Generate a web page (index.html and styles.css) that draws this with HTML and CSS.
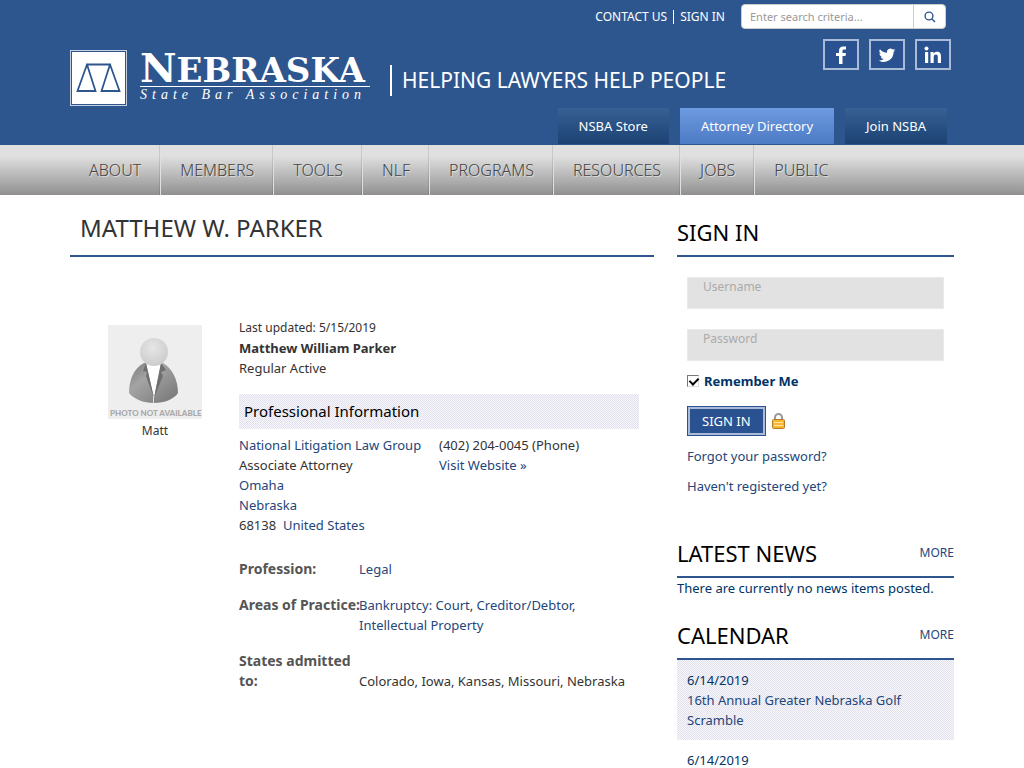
FILE: index.html
```
<!DOCTYPE html>
<html lang="en">
<head>
  <meta charset="UTF-8" />
  <meta name="viewport" content="width=device-width, initial-scale=1.0" />
  <title>Matthew W. Parker - Nebraska State Bar Association</title>
  <link rel="stylesheet" href="styles.css">
</head>

<body>

<header>
  <!-- Contact links and search -->
  <div class="top-bar">
    <div class="top-links">
      <a href="#">CONTACT US</a>
      <a href="#">SIGN IN</a>
    </div>
    <form class="search">
      <input type="text" placeholder="Enter search criteria..." aria-label="Search" />
      <button type="submit" aria-label="Search">
        <svg width="12" height="12" viewBox="0 0 12 12" fill="none" stroke="#2e568e" stroke-width="1.4"><circle cx="5" cy="5" r="3.9"/><path d="M7.8 7.8L11 11"/></svg>
      </button>
    </form>
  </div>

  <!-- Logo, tagline, social -->
  <div class="brand-row">
    <a class="logo" href="#">
      <svg width="57" height="57" viewBox="0 0 57 57" fill="none">
        <rect x="0.5" y="0.5" width="56" height="55" stroke="#c3cfe0"/>
        <rect x="2" y="2" width="53" height="52" fill="#fff"/>
        <path d="M16 14.500H41M17 14.500L7.500 41H25.500L17 14.500M40 14.500L31.500 41H49.500L40 14.500" stroke="#2e568e" stroke-width="1.800"/>
      </svg>
      <span class="logo-text">
        <span class="logo-name"><span class="logo-cap">N</span>EBRASKA</span>
        <span class="logo-sub">State Bar Association</span>
      </span>
    </a>
    <span class="tagline">HELPING LAWYERS HELP PEOPLE</span>
    <div class="social">
      <a href="#" aria-label="Facebook">
        <svg width="20" height="20" viewBox="0 0 20 20" fill="#fff"><path d="M8 19v-8H5V8h3V6c0-3 1.500-4.500 4-4.500h3v3h-2c-1 0-1.500.5-1.500 1.500v2H15l-.5 3h-3v8z"/></svg>
      </a>
      <a href="#" aria-label="Twitter">
        <svg width="18" height="18" viewBox="0 0 24 24" fill="#fff"><path d="M23 5.500a9 9 0 0 1-2.500.7 4.500 4.500 0 0 0 2-2.500 9 9 0 0 1-2.900 1.100A4.500 4.500 0 0 0 12 9 13 13 0 0 1 2.600 4.200a4.500 4.500 0 0 0 1.400 6 4.500 4.500 0 0 1-2-.5 4.500 4.500 0 0 0 3.600 4.500 4.500 4.500 0 0 1-2 .1 4.500 4.500 0 0 0 4.200 3.100A9 9 0 0 1 1 19.300a13 13 0 0 0 19.800-11.500A9 9 0 0 0 23 5.500z"/></svg>
      </a>
      <a href="#" aria-label="LinkedIn">
        <svg width="20" height="20" viewBox="0 0 20 20" fill="#fff"><circle cx="3.500" cy="3.500" r="2"/><path d="M2 7h3.200v11H2zM7.500 7h3v1.500c1-1.300 2-1.800 3.500-1.800 3 0 4 2 4 4.600V18h-3.200v-6c0-1.700-.6-2.500-1.800-2.500S10.700 10.300 10.700 12v6H7.500z"/></svg>
      </a>
    </div>
  </div>

  <div class="header-tabs">
    <a href="#">NSBA Store</a>
    <a class="active" href="#">Attorney Directory</a>
    <a href="#">Join NSBA</a>
  </div>
</header>

<nav class="main-nav">
  <a href="#">ABOUT</a>
  <a href="#">MEMBERS</a>
  <a href="#">TOOLS</a>
  <a href="#">NLF</a>
  <a href="#">PROGRAMS</a>
  <a href="#">RESOURCES</a>
  <a href="#">JOBS</a>
  <a href="#">PUBLIC</a>
</nav>

<div class="page">
  <main>
    <h1>MATTHEW W. PARKER</h1>

    <div class="profile">
      <div class="photo">
        <svg width="94" height="94" viewBox="0 0 94 94">
          <defs>
            <radialGradient id="head" cx="0.45" cy="0.35" r="0.7"><stop offset="0" stop-color="#e6e6e6"/><stop offset="1" stop-color="#cbcacb"/></radialGradient>
            <linearGradient id="coat" x1="0" y1="0" x2="1" y2="1"><stop offset="0" stop-color="#787878"/><stop offset="0.35" stop-color="#a4a4a4"/><stop offset="1" stop-color="#747474"/></linearGradient>
          </defs>
          <rect width="94" height="94" fill="#eee"/>
          <path d="M36 38C26 43 21 55 21 68c5 6 14 10 25 10s20-4 24-10c0-13-6-25-15-30z" fill="url(#coat)"/>
          <path d="M38 38h15l-7 35z" fill="#fff"/>
          <path d="M38 38l-3 8 4 1-1 4 8 22zM53 38l5 7-5 2 2 4-9 22z" fill="#6f6f6f"/>
          <path d="M45.500 71v7" stroke="#ddd"/>
          <circle cx="46" cy="27" r="14" fill="url(#head)"/>
          <text x="2" y="91" class="photo-note">PHOTO NOT AVAILABLE</text>
        </svg>
        <span>Matt</span>
      </div>

      <div class="info">
        <div class="updated">Last updated: 5/15/2019</div>
        <strong>Matthew William Parker</strong>
        <div>Regular Active</div>

        <h3 class="stipple">Professional Information</h3>
        <div class="contact">
          <div>
            <a href="#">National Litigation Law Group</a><br>
            Associate Attorney<br>
            <a href="#">Omaha</a><br>
            <a href="#">Nebraska</a><br>
            68138&nbsp; <a href="#">United States</a>
          </div>
          <div>
            (402) 204-0045 (Phone)<br>
            <a href="#">Visit Website »</a>
          </div>
        </div>

        <dl>
          <dt>Profession:</dt>
          <dd><a href="#">Legal</a></dd>
          <dt>Areas of Practice:</dt>
          <dd><a href="#">Bankruptcy: Court</a>, <a href="#">Creditor/Debtor</a>, <a href="#">Intellectual Property</a></dd>
          <dt>States admitted to:</dt>
          <dd>Colorado, Iowa, Kansas, Missouri, Nebraska</dd>
        </dl>
      </div>
    </div>
  </main>

  <aside>
    <h2>SIGN IN</h2>
    <form class="login">
      <input type="text" placeholder="Username" aria-label="Username" />
      <input type="password" placeholder="Password" aria-label="Password" />
      <div class="remember">
        <input type="checkbox" id="remember" checked />
        <label for="remember">Remember Me</label>
      </div>
      <div class="login-submit">
        <button type="submit">SIGN IN</button>
        <svg width="13" height="16" viewBox="0 0 13 16" fill="none">
          <path d="M3 8V4.500a3.500 3.500 0 0 1 7 0V8" stroke="#999" stroke-width="2"/>
          <rect x="0.5" y="6.500" width="12" height="9" rx="1" fill="#f8b62c" stroke="#b67a2c"/>
          <path d="M2 9.500h9M2 12.500h9" stroke="#ffe9a8"/>
        </svg>
      </div>
      <a href="#">Forgot your password?</a>
      <a href="#">Haven't registered yet?</a>
    </form>

    <h2>LATEST NEWS <a href="#">MORE</a></h2>
    <p class="news">There are currently no news items posted.</p>

    <h2>CALENDAR <a href="#">MORE</a></h2>
    <div class="event stipple">
      6/14/2019<br>
      <a href="#">16th Annual Greater Nebraska Golf Scramble</a>
    </div>
    <div class="event">6/14/2019</div>
  </aside>
</div>

</body>
</html>
```
FILE: styles.css
```
/* General page */
* {
  box-sizing: border-box;
}

body {
  margin: 0;
  background-color: #fff;
  color: #333;
  font-family: "Noto Sans", "Liberation Sans", sans-serif;
  font-size: 13px;
  line-height: 20px;
}

a {
  color: #24467a;
  text-decoration: none;
}

input,
button {
  font-family: inherit;
}

/* Header */
header {
  background-color: #2e568e;
  padding: 4px 70px 0;
}

.top-bar {
  display: flex;
  justify-content: flex-end;
  padding-right: 8px;
}

.top-links {
  display: flex;
  align-items: center;
  margin-right: 16px;
  font-size: 12px;
  line-height: 14px;
}

.top-links a {
  color: #fff;
}

.top-links a + a {
  margin-left: 6px;
  padding-left: 6px;
  border-left: 1px solid #fff;
}

.search {
  display: flex;
  width: 205px;
  height: 25px;
  background-color: #fff;
  border: 1px solid #ccc;
  border-radius: 4px;
}

.search input {
  flex: 1;
  min-width: 0;
  border: none;
  background: none;
  padding: 0 8px;
  font-size: 11px;
}

.search input::placeholder {
  color: #999;
}

.search button {
  display: flex;
  align-items: center;
  justify-content: center;
  width: 32px;
  padding: 0;
  border: none;
  border-left: 1px solid #ccc;
  background: none;
}

.brand-row {
  display: flex;
  align-items: flex-start;
  height: 69px;
  margin-top: 10px;
}

.logo {
  display: flex;
  margin-top: 11px;
  color: #fff;
}

.logo-text {
  display: flex;
  flex-direction: column;
  margin-left: 13px;
  width: 230px;
}

.logo-name {
  border-bottom: 1px solid #fff;
  font-family: "DejaVu Serif", serif;
  font-weight: bold;
  font-size: 34px;
  line-height: 36px;
  height: 37px;
  white-space: nowrap;
}

.logo-cap {
  font-size: 40px;
}

.logo-sub {
  font-family: "Liberation Serif", serif;
  font-style: italic;
  font-size: 14px;
  line-height: 16px;
  letter-spacing: 5px;
  white-space: nowrap;
}

.tagline {
  margin: 26px 0 0 20px;
  padding-left: 10px;
  border-left: 2px solid #fff;
  color: #fff;
  font-size: 21px;
  line-height: 31px;
  white-space: nowrap;
}

.social {
  display: flex;
  gap: 10px;
  margin: 0 3px 0 auto;
}

.social a {
  display: flex;
  align-items: center;
  justify-content: center;
  width: 36px;
  height: 31px;
  border: 2px solid #a9bbd7;
  background-color: #2a5190;
}

.header-tabs {
  display: flex;
  justify-content: flex-end;
  gap: 11px;
  padding: 0 7px 1px 0;
}

.header-tabs a {
  padding: 0 21px;
  background: linear-gradient(#386092, #1c4274);
  color: #fff;
  line-height: 36px;
}

.header-tabs a.active {
  background: linear-gradient(#6d9ae0, #4d7bc4);
}

/* Navigation */
.main-nav {
  display: flex;
  padding: 0 70px;
  background: linear-gradient(#e0e0e0 22%, #a5a5a5 80%, #928e8f);
}

.main-nav a {
  padding: 0 19px;
  border-right: 1px solid #e0e0e0;
  box-shadow: inset -1px 0 rgba(0, 0, 0, 0.1);
  color: #444;
  font-size: 16px;
  font-weight: 300;
  line-height: 50px;
  text-shadow: 1px 1px 0 #ddd;
}

.main-nav a:last-child {
  border-right: none;
  box-shadow: none;
}

/* Page columns */
.page {
  display: flex;
  gap: 23px;
  padding: 0 70px;
}

main {
  flex: 1;
  min-width: 0;
}

aside {
  width: 277px;
  color: #036;
}

h1,
h2,
h3 {
  margin: 0;
  font-weight: normal;
}

h1 {
  padding: 16px 10px 10px;
  border-bottom: 2px solid #2e568e;
  font-size: 24px;
  line-height: 34px;
}

h2 {
  display: flex;
  align-items: center;
  justify-content: space-between;
  height: 62px;
  padding-top: 14px;
  border-bottom: 2px solid #2e568e;
  color: #000;
  font-size: 22px;
}

h2 a {
  font-size: 12px;
}

/* Profile */
.profile {
  display: flex;
  gap: 37px;
  padding: 61px 15px 0 38px;
}

.photo {
  width: 94px;
  padding-top: 7px;
  font-size: 12px;
  text-align: center;
}

.photo svg {
  display: block;
  margin-bottom: 2px;
}

.photo-note {
  fill: #aaa;
  font-family: Lato, sans-serif;
  font-size: 8px;
  font-weight: 900;
}

.info {
  flex: 1;
}

.updated {
  font-size: 12px;
}

.info h3 {
  margin: 16px 0 6px;
  padding: 0 5px;
  color: #000;
  font-size: 15px;
  line-height: 35px;
}

.stipple {
  background: repeating-conic-gradient(#e0e0ee 0 25%, #f8f8fb 0 50%) 0 0 / 2px 2px;
}

.contact {
  display: grid;
  grid-template-columns: 1fr 1fr;
}

dl {
  display: grid;
  grid-template-columns: 120px 1fr;
  row-gap: 16px;
  margin: 24px 0 0;
}

/* labels may run up to the edge of the value column */
dt {
  margin-right: -4px;
  color: #555;
  font-size: 14px;
  font-weight: bold;
}

dd {
  margin: 0;
  align-self: end;
}

/* Sign in */
.login {
  display: flex;
  flex-direction: column;
  gap: 10px;
  padding: 20px 10px;
}

.login > input {
  height: 32px;
  padding: 0 15px 13px;
  border: 1px solid #eaeaea;
  background-color: #e2e2e2;
  font-size: 12px;
}

.login > input:first-child {
  margin-bottom: 10px;
}

.login > input::placeholder {
  color: #aaa;
}

.remember {
  display: flex;
  align-items: center;
  gap: 5px;
  font-weight: bold;
}

.remember input {
  appearance: none;
  width: 12px;
  height: 12px;
  margin: 0;
  border: 1px solid;
  border-color: #777 #ddd #ddd #777;
}

.remember input:checked::before {
  content: "";
  display: block;
  width: 4px;
  height: 7px;
  margin: 0 0 0 3px;
  border: solid #000;
  border-width: 0 2px 2px 0;
  transform: rotate(45deg);
}

.login-submit {
  display: flex;
  align-items: center;
  gap: 6px;
  margin: 5px 0 0;
}

.login-submit button {
  height: 30px;
  padding: 0 14px;
  border: 1px solid #2a5190;
  background-color: #2a5190;
  box-shadow: inset 0 0 0 2px #a9bbd7;
  color: #fff;
  font-size: 13px;
}

.news {
  margin: 0;
}

.event {
  padding: 10px;
}
```
